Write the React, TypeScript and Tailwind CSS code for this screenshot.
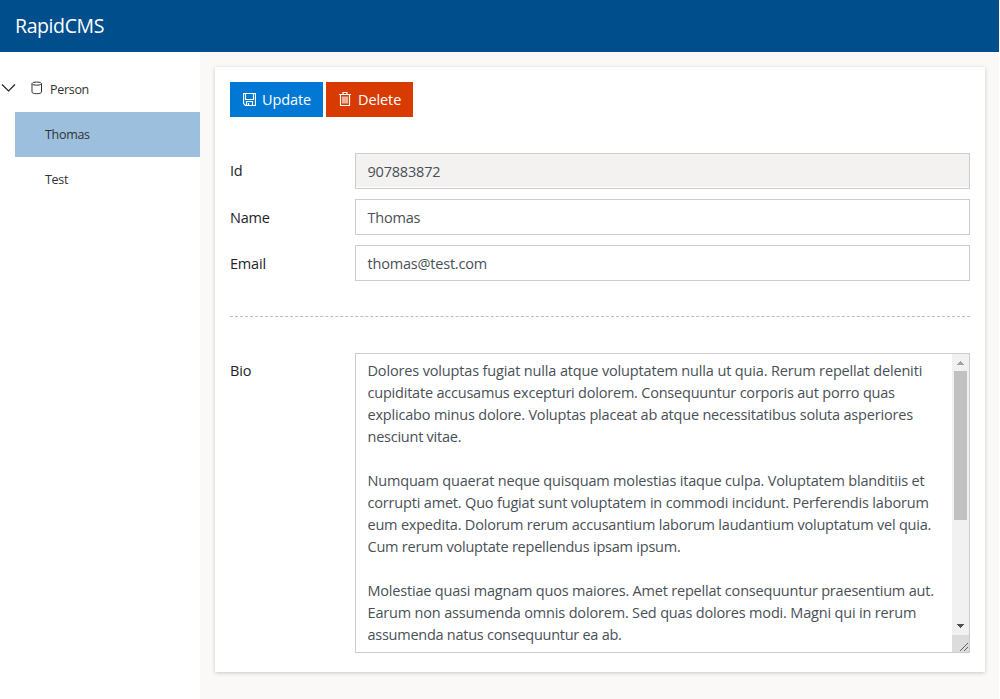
import React from "react";

const bio: [string, string][] = [
  ["Dolores voluptas fugiat nulla atque voluptatem nulla ut quia. Rerum repellat deleniti", "tracking-[-0.15px]"],
  ["cupiditate accusamus excepturi dolorem. Consequuntur corporis aut porro quas", "tracking-[-0.21px]"],
  ["explicabo minus dolore. Voluptas placeat ab atque necessitatibus soluta asperiores", "tracking-[-0.19px]"],
  ["nesciunt vitae.", "tracking-[-0.24px]"],
  ["", ""],
  ["Numquam quaerat neque quisquam molestias itaque culpa. Voluptatem blanditiis et", "tracking-[-0.18px]"],
  ["corrupti amet. Quo fugiat sunt voluptatem in commodi incidunt. Perferendis laborum", "tracking-[-0.18px]"],
  ["eum expedita. Dolorum rerum accusantium laborum laudantium voluptatum vel quia.", "tracking-[-0.21px]"],
  ["Cum rerum voluptate repellendus ipsam ipsum.", "tracking-[-0.23px]"],
  ["", ""],
  ["Molestiae quasi magnam quos maiores. Amet repellat consequuntur praesentium aut.", "tracking-[-0.2px]"],
  ["Earum non assumenda omnis dolorem. Sed quas dolores modi. Magni qui in rerum", "tracking-[-0.175px]"],
  ["assumenda natus consequuntur ea ab.", "tracking-[-0.26px]"],
];

function Field({ label, value, disabled }: { label: string; value: string; disabled?: boolean }) {
  return (
    <div className="flex h-9">
      <div className={"w-[125px] leading-[22px] text-[#212529] " + (disabled ? "pt-[7px]" : "pt-[8px]")}>{label}</div>
      <div className="flex-1 border border-[#cccccc] bg-white pb-px text-[#495057]">
        <div className={"h-full pl-[11.5px] pt-[7px] leading-[22px] tracking-[-0.2px] " + (disabled ? "bg-[#f3f2f1]" : "bg-white")}>
          {value}
        </div>
      </div>
    </div>
  );
}

function Scrollbar() {
  return (
    <div className="flex w-[17px] flex-col bg-[#f1f1f1]">
      <svg width="17" height="17" viewBox="0 0 17 17" shapeRendering="crispEdges">
        <path d="M8 7h1v1h1v1h1v1h1v1H5v-1h1V9h1V8h1z" fill="#a3a3a3" />
      </svg>
      <div className="mx-[2px] h-[149px] bg-[#c1c1c1]" />
      <svg className="mt-auto" width="17" height="17" viewBox="0 0 17 17" shapeRendering="crispEdges">
        <path d="M5 6h7v1h-1v1h-1v1H9v1H8V9H7V8H6V7H5z" fill="#505050" />
      </svg>
      <svg className="bg-[#dcdcdc]" width="17" height="17" viewBox="0 0 17 17" shapeRendering="crispEdges" fill="#606060">
        {[0, 1, 2, 3, 4, 5, 6, 7].map((n) => (
          <rect key={n} x={8 + n} y={15 - n} width="1" height="1" />
        ))}
        {[0, 1, 2, 3].map((n) => (
          <rect key={n} x={12 + n} y={15 - n} width="1" height="1" />
        ))}
      </svg>
    </div>
  );
}

export default function App() {
  return (
    <div className="w-[1000px] bg-white">
      <div className="flex h-[699px] w-[999px] flex-col overflow-hidden bg-[#faf9f8] font-['Open_Sans','Noto_Sans',sans-serif] text-[14.5px] tracking-[-0.2px] text-[#212529]">
        <header className="h-[52px] shrink-0 bg-[#004e8c] pl-[15px] pt-[11px] text-[19.5px] leading-[30px] tracking-[-0.4px] text-white">
          RapidCMS
        </header>
        <div className="flex flex-1">
          <nav className="w-[200px] shrink-0 bg-white pt-[15px] text-[12.5px] tracking-[-0.3px] text-[#323130]">
            <div className="flex h-[45px] items-center">
              <svg className="mb-px w-[17px] shrink-0" width="17" height="16" viewBox="0 0 17 16" fill="none" stroke="#222" strokeWidth="1.2">
                <path d="M2 3.5 8.5 10 15 3.5" />
              </svg>
              <svg className="mb-[3px] ml-[14px]" width="12" height="14" viewBox="0 0 12 14" fill="none" stroke="#333" strokeWidth="1">
                <path d="M1 2.8v8.2c0 1 1.5 1.7 4.75 1.7s4.75-.7 4.75-1.7V2.8" />
                <ellipse cx="5.75" cy="2.6" rx="4.75" ry="1.6" />
              </svg>
              <span className="ml-[7px] pt-[2px]">Person</span>
            </div>
            <div className="ml-[15px] flex h-[45px] items-center bg-[#9bbfdd] pl-[30px] pt-[2px]">Thomas</div>
            <div className="ml-[15px] flex h-[45px] items-center pl-[30px] pt-[2px]">Test</div>
          </nav>
          <main className="flex-1 py-[15px] pl-[15px] pr-[14px]">
            <section className="h-[605px] bg-white p-[15px] shadow-[0_1px_4px_rgba(0,0,0,0.2)]">
              <div className="flex gap-[3px] text-white">
                <div className="flex h-[35px] w-[93px] items-center bg-[#0078d4] pl-[13px]">
                  <svg width="13" height="13" viewBox="0 0 13 13" fill="none" stroke="white" strokeWidth="1.2">
                    <path d="M.5.5h12v12h-10l-2-2zM2.5.5v6h8v-6M3.5 12.5v-4h6v4M5.5 10v2.5" />
                  </svg>
                  <span className="ml-[6px] tracking-[-0.1px]">Update</span>
                </div>
                <div className="flex h-[35px] w-[87px] items-center bg-[#d83b01] pl-[13px]">
                  <svg className="mb-px" width="12" height="14" viewBox="0 0 12 14" fill="none" stroke="white" strokeWidth="1.2">
                    <path d="M0 2.5h12M4 2.5v-2h4v2M1.5 2.5v11h9v-11M4 4.5v7M6 4.5v7M8 4.5v7" />
                  </svg>
                  <span className="ml-[7px] tracking-[-0.1px]">Delete</span>
                </div>
              </div>
              <div className="mt-9 flex flex-col gap-[10px]">
                <Field label="Id" value="907883872" disabled />
                <Field label="Name" value="Thomas" />
                <Field label="Email" value="thomas@test.com" />
              </div>
              <div className="mt-[35px] border-t border-dashed border-[#bdbdbd]" />
              <div className="mt-9 flex">
                <div className="w-[125px] pt-[7px] leading-[22px]">Bio</div>
                <div className="flex h-[300px] flex-1 border border-[#cccccc] text-[#495057]">
                  <div className="flex-1 overflow-hidden whitespace-pre pl-[11.5px] pt-[6px]">
                    {bio.map(([text, tracking], i) => (
                      <div key={i} className={"h-[22px] leading-[22px] " + tracking}>{text}</div>
                    ))}
                  </div>
                  <Scrollbar />
                </div>
              </div>
            </section>
          </main>
        </div>
      </div>
    </div>
  );
}
